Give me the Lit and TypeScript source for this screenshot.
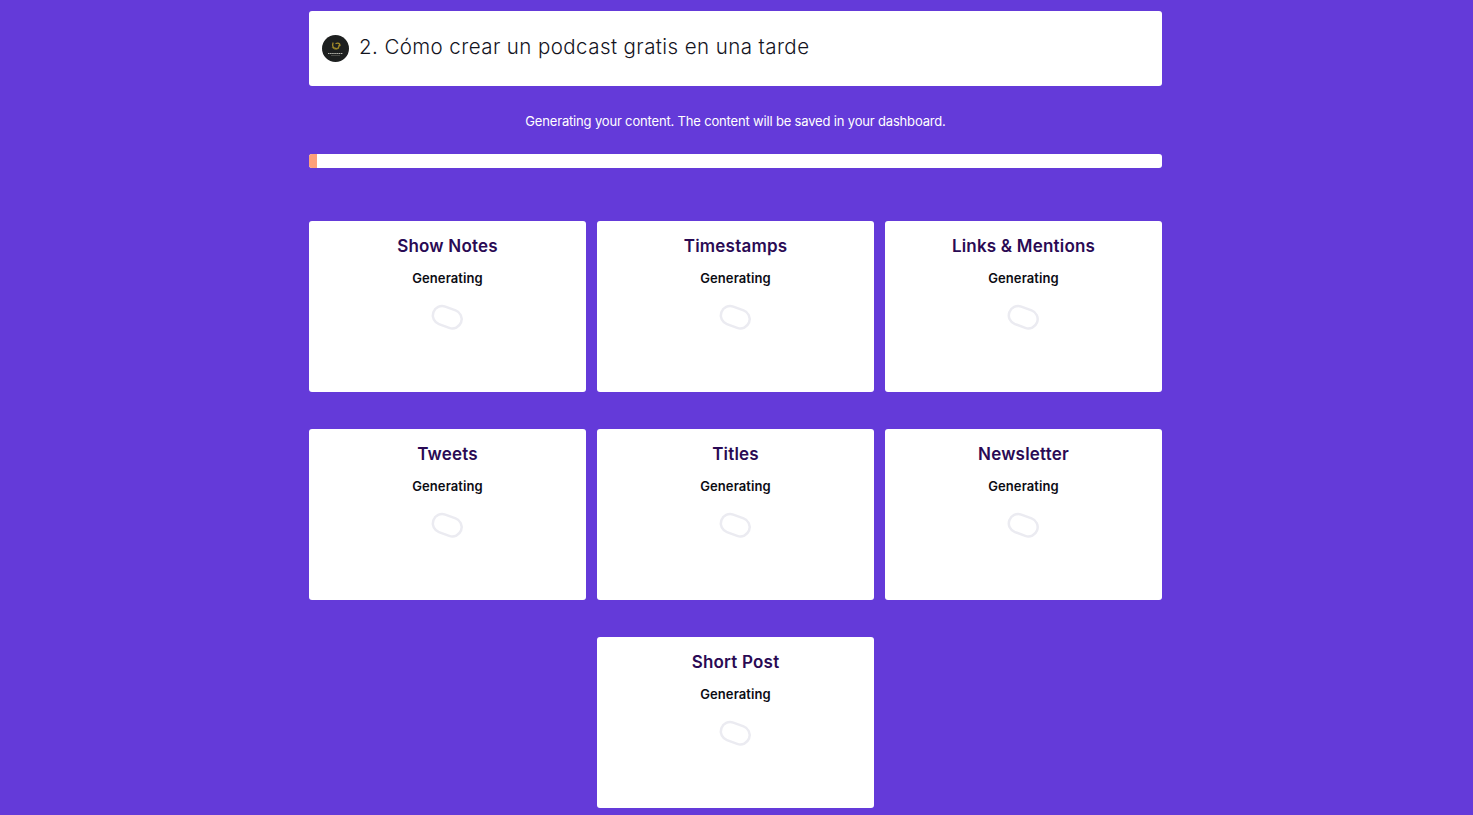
import { LitElement, html, css } from "lit";
import { customElement } from "lit/decorators.js";

const CARDS = ["Show Notes", "Timestamps", "Links & Mentions", "Tweets", "Titles", "Newsletter", "Short Post"];

@customElement("app-root")
export class AppRoot extends LitElement {
  static styles = css`
    :host {
      display: block;
      min-height: 815px;
      box-sizing: border-box;
      padding-right: 2px;
      background: #643ad9;
      font-family: Inter, "Open Sans", sans-serif;
      overflow: hidden;
    }
    .wrap {
      width: 853px;
      margin: 0 auto;
      padding-top: 11px;
      height: 804px;
    }
    .head {
      height: 75px;
      box-sizing: border-box;
      background: #fff;
      border-radius: 3px;
      display: flex;
      align-items: center;
      gap: 10px;
      padding: 0 13px 0;
    }
    .avatar { width: 27px; height: 27px; display: block; flex: none; }
    .title {
      font-size: 20.5px;
      font-weight: 300;
      color: #14141e;
      letter-spacing: 0.42px;
      line-height: 24px;
      margin-top: -3px;
    }
    .msg {
      margin: 27px 0 0;
      text-align: center;
      color: #fff;
      font-size: 13px;
      line-height: 16px;
      letter-spacing: -0.17px;
    }
    .bar {
      margin-top: 25px;
      height: 14px;
      background: #fff;
      border-radius: 3px;
      overflow: hidden;
    }
    .fill { height: 100%; width: 8px; background: #ffa07a; }
    .grid {
      margin-top: 53px;
      display: flex;
      flex-wrap: wrap;
      justify-content: center;
      gap: 37px 11px;
    }
    .card {
      width: 277px;
      height: 171px;
      box-sizing: border-box;
      background: #fff;
      border-radius: 3px;
      padding-top: 15px;
      display: flex;
      flex-direction: column;
      align-items: center;
    }
    .name {
      font-size: 17px;
      line-height: 20px;
      font-weight: 600;
      color: #2a0a54;
      letter-spacing: 0.2px;
    }
    .status {
      margin-top: 14px;
      font-size: 13px;
      line-height: 16px;
      font-weight: 600;
      color: #0c0c14;
      letter-spacing: 0.1px;
    }
    .spin { display: block; margin-top: 17px; width: 36px; height: 30px; }
  `;

  render() {
    return html`
      <div class="wrap">
        <div class="head">
          <svg class="avatar" viewBox="0 0 27 27">
            <circle cx="13.5" cy="13.5" r="13.5" fill="#1d1f1f" />
            <path d="M11 8c-1 3 0 5 3 5.500 2 .3 3-1 3-3M14 8.500c2-1 4 0 4 2" fill="none" stroke="#a98f2a" stroke-width="1.300" stroke-linecap="round" />
            <path d="M10 12c1 2 4 3 7 1" fill="none" stroke="#8a7a24" stroke-width="1" />
            <path d="M6 18.500h15" stroke="#b9b9b0" stroke-width="1.200" stroke-dasharray="1.500 .6" />
            <path d="M9 20.500h9" stroke="#5d5d58" stroke-width=".7" />
          </svg>
          <div class="title">2. Cómo crear un podcast gratis en una tarde</div>
        </div>
        <p class="msg">Generating your content. The content will be saved in your dashboard.</p>
        <div class="bar"><div class="fill"></div></div>
        <div class="grid">
          ${CARDS.map(
            (c) => html`
              <div class="card">
                <div class="name">${c}</div>
                <div class="status">Generating</div>
                <svg class="spin" viewBox="0 0 36 30">
                  <rect x="2.500" y="5" width="29.500" height="18.500" rx="9.250" transform="rotate(20 17.250 14.250)" fill="none" stroke="#ebebf1" stroke-width="2.500" />
                </svg>
              </div>
            `
          )}
        </div>
      </div>
    `;
  }
}
